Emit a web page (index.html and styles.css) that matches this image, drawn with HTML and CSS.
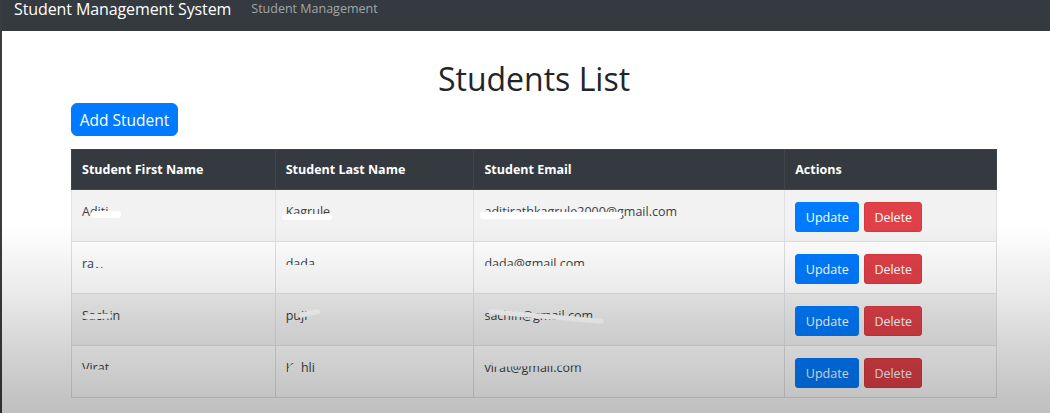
FILE: index.html
```html
<!DOCTYPE html>
<html lang="en">
<head>
<meta charset="utf-8">
<title>Student Management System</title>
<link rel="stylesheet" href="styles.css">
</head>
<body>
<nav class="navbar">
  <span class="brand">Student Management System</span>
  <span class="nav-link">Student Management</span>
</nav>
<main class="container">
  <h1 class="title">Students List</h1>
  <button class="btn btn-add">Add Student</button>
  <table class="table">
    <thead>
      <tr>
        <th class="c1">Student First Name</th>
        <th class="c2">Student Last Name</th>
        <th class="c3">Student Email</th>
        <th class="c4">Actions</th>
      </tr>
    </thead>
    <tbody>
      <tr class="odd">
        <td><span class="txt">Aditi<i class="mk mk-a1"></i></span></td>
        <td><span class="txt">Kagrule<i class="mk mk-a2"></i></span></td>
        <td><span class="txt">aditirathkagrule2000@gmail.com<i class="mk mk-a3"></i></span></td>
        <td><button class="btn btn-sm btn-update">Update</button><button class="btn btn-sm btn-delete">Delete</button></td>
      </tr>
      <tr>
        <td><span class="txt">ravi<i class="mk mk-b1"></i></span></td>
        <td><span class="txt">dada<i class="mk mk-b2"></i></span></td>
        <td><span class="txt">dada@gmail.com<i class="mk mk-b3"></i></span></td>
        <td><button class="btn btn-sm btn-update">Update</button><button class="btn btn-sm btn-delete">Delete</button></td>
      </tr>
      <tr class="odd">
        <td><span class="txt">Sachin<i class="mk mk-c1"></i></span></td>
        <td><span class="txt">puji<i class="mk mk-c2"></i></span></td>
        <td><span class="txt">sachin@gmail.com<i class="mk mk-c3"></i></span></td>
        <td><button class="btn btn-sm btn-update">Update</button><button class="btn btn-sm btn-delete">Delete</button></td>
      </tr>
      <tr>
        <td><span class="txt">Virat<i class="mk mk-d1"></i></span></td>
        <td><span class="txt">Kohli<i class="mk mk-d2"></i></span></td>
        <td><span class="txt">virat@gmail.com<i class="mk mk-d3"></i></span></td>
        <td><button class="btn btn-sm btn-update">Update</button><button class="btn btn-sm btn-delete">Delete</button></td>
      </tr>
    </tbody>
  </table>
</main>
<div class="shade"></div>
</body>
</html>
```

FILE: styles.css
```css
html, body {
  margin: 0;
  padding: 0;
  height: 100%;
  background: #ffffff;
}
body {
  font-family: "Open Sans", "Noto Sans", "Liberation Sans", sans-serif;
  color: #212529;
  border-left: 2px solid #3a3d40;
  box-sizing: border-box;
}
.navbar {
  height: 31px;
  background: #343a40;
  display: flex;
  align-items: flex-start;
  padding: 0 12px 0 14px;
  margin-left: -2px;
}
.brand {
  color: #ffffff;
  font-size: 16px;
  line-height: 18px;
  letter-spacing: -0.1px;
}
.nav-link {
  color: rgba(255, 255, 255, 0.55);
  font-size: 12.5px;
  line-height: 18px;
  margin-left: 20px;
}
.container {
  width: 926px;
  margin-left: 69px;
}
.title {
  margin: 26px 0 0;
  text-align: center;
  font-size: 32px;
  font-weight: 400;
  line-height: 44px;
  color: #212529;
}
.btn {
  font-family: inherit;
  border: 1px solid transparent;
  color: #ffffff;
  cursor: pointer;
}
.btn-add {
  display: block;
  margin-top: 2px;
  height: 33px;
  width: 107px;
  padding: 0;
  background: #007bff;
  border-color: #007bff;
  border-radius: 6px;
  font-size: 15.5px;
}
.table {
  margin-top: 13px;
  width: 926px;
  border-collapse: collapse;
  font-size: 12.5px;
}
.c1 { width: 204px; }
.c2 { width: 199px; }
.c3 { width: 311px; }
.c4 { width: 212px; }
th {
  background: #343a40;
  color: #ffffff;
  font-weight: 700;
  text-align: left;
  height: 40px;
  padding: 0 10px;
  box-sizing: border-box;
  border: 1px solid #3f454b;
  font-size: 12.5px;
}
td {
  padding: 12px 10px 9px;
  vertical-align: top;
  border: 1px solid #dee2e6;
  color: #3b3f44;
  line-height: 19px;
}
tbody tr { background: #ffffff; }
tbody tr.odd { background: #f2f2f2; }
.txt {
  position: relative;
  display: inline-block;
}
.btn-sm {
  height: 30px;
  padding: 0 9px;
  border-radius: 3px;
  font-size: 12.5px;
  vertical-align: top;
}
.btn-update {
  background: #007bff;
  border-color: #007bff;
  width: 64px;
}
.btn-delete {
  background: #e04048;
  border-color: #d43a42;
  margin-left: 5px;
  width: 58px;
}
.mk {
  position: absolute;
  background: #ffffff;
  height: 6px;
  border-radius: 3px;
}
.mk-a1 { left: 9px; top: 9px; width: 30px; height: 7px; }
.mk-a2 { left: -4px; top: 12px; width: 50px; height: 6px; }
.mk-a3 { left: -4px; top: 10px; width: 142px; height: 7px; }
.mk-b1 { left: 12px; top: 5px; width: 18px; height: 8px; }
.mk-b2 { left: -2px; top: 11px; width: 44px; height: 6px; }
.mk-b3 { left: -4px; top: 12px; width: 114px; height: 6px; }
.mk-c1 { left: 2px; top: 8px; width: 28px; height: 5px; transform: rotate(-3deg); }
.mk-c2 { left: 12px; top: 5px; width: 22px; height: 5px; transform: rotate(-12deg); }
.mk-c3 { left: 4px; top: 8px; width: 116px; height: 5px; transform: rotate(5deg); }
.mk-d1 { left: -3px; top: 12px; width: 54px; height: 6px; transform: rotate(3deg); }
.mk-d2 { left: 2px; top: 6px; width: 13px; height: 12px; border-radius: 6px 2px 4px 2px; }
.mk-d3 { left: 8px; top: 3px; width: 102px; height: 5px; transform: rotate(-1deg); }
.shade {
  position: fixed;
  left: 0;
  top: 0;
  width: 100%;
  height: 100%;
  pointer-events: none;
  background: linear-gradient(to bottom, rgba(0,0,0,0) 225px, rgba(0,0,0,0.08) 290px, rgba(0,0,0,0.17) 350px, rgba(0,0,0,0.25) 413px);
}
```
